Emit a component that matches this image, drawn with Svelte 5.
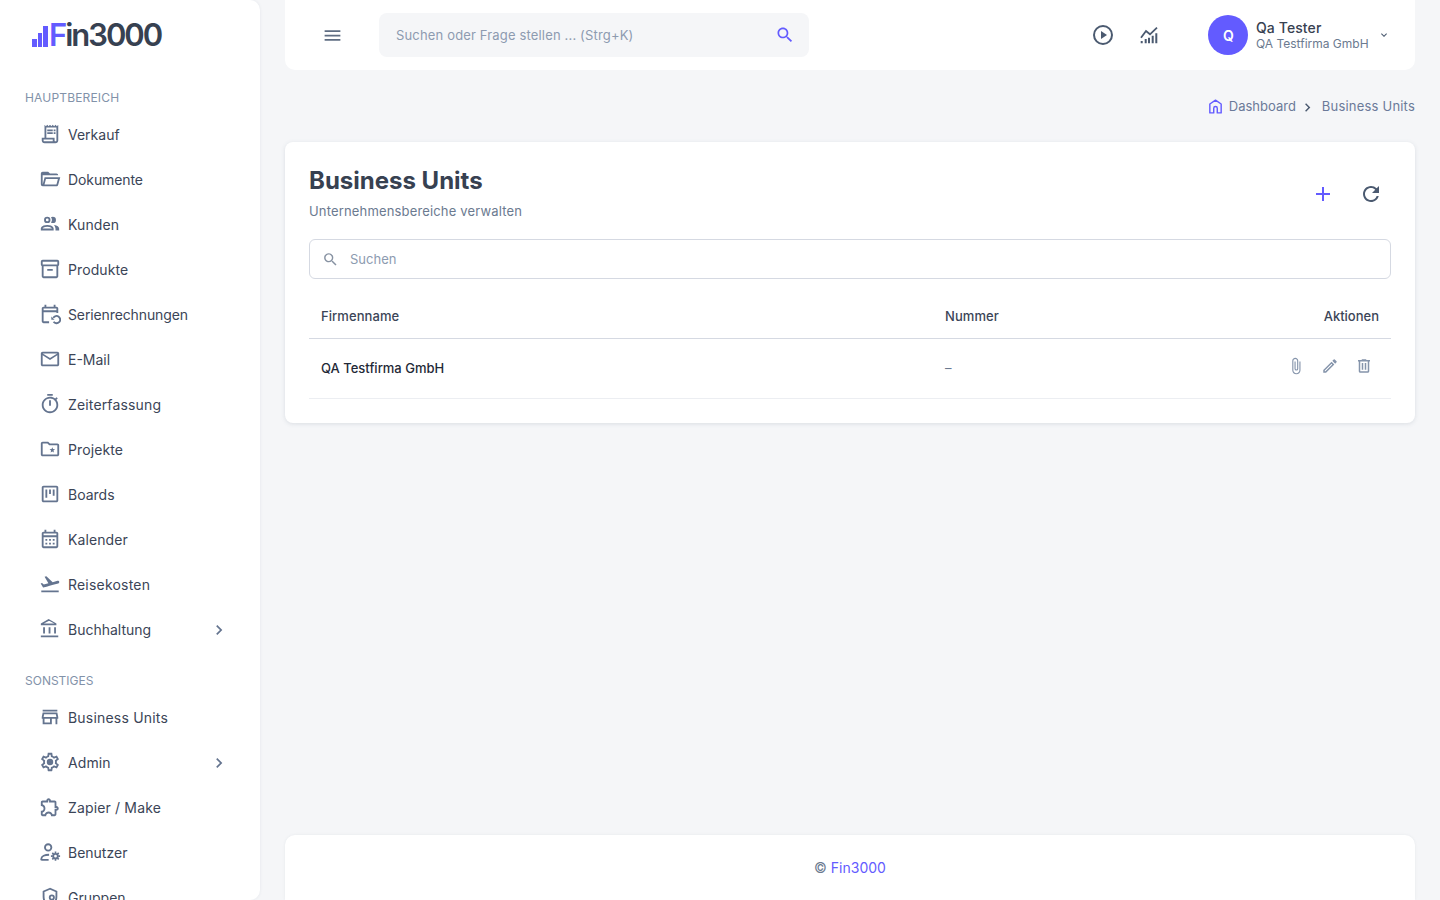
<script>
  const P = {
    receipt: 'M19.5 3.5 18 2l-1.5 1.5L15 2l-1.5 1.5L12 2l-1.5 1.5L9 2 7.5 3.5 6 2v14H3v3c0 1.66 1.34 3 3 3h12c1.66 0 3-1.34 3-3V2l-1.5 1.5zM15 20H6c-.55 0-1-.45-1-1v-1h10v2zm4-1c0 .55-.45 1-1 1s-1-.45-1-1v-3H8V5h11v14zM9 7h6v2H9zM16 7h2v2h-2zM9 10h6v2H9zM16 10h2v2h-2z',
    folder: 'M6.1,10L4,18V8H21A2,2 0 0,0 19,6H12L10,4H4A2,2 0 0,0 2,6V18A2,2 0 0,0 4,20H19C19.9,20 20.7,19.4 20.9,18.5L23.2,10H6.1M19,18H6L7.6,12H20.6L19,18Z',
    people: 'M13.07 10.41A5 5 0 0 0 13.07 4.59A3.39 3.39 0 0 1 15 4A3.5 3.5 0 0 1 15 11A3.39 3.39 0 0 1 13.07 10.41M5.5 7.5A3.5 3.5 0 1 1 9 11A3.5 3.5 0 0 1 5.5 7.5M7.5 7.5A1.5 1.5 0 1 0 9 6A1.5 1.5 0 0 0 7.5 7.5M16 17V19H2V17S2 13 9 13 16 17 16 17M14 17C13.86 16.22 12.67 15 9 15S4.07 16.22 4 17M15.95 13A5.32 5.32 0 0 1 18 17V19H22V17S22 13.37 15.94 13Z',
    archive: 'M20 2H4c-1 0-2 .9-2 2v3.01c0 .72.43 1.34 1 1.69V20c0 1.1 1.1 2 2 2h14c.9 0 2-.9 2-2V8.7c.57-.35 1-.97 1-1.69V4c0-1.1-1-2-2-2zm-1 18H5V9h14v11zm1-13H4V4h16v3zM9 12h6v2H9z',
    mail: 'M22 6c0-1.1-.9-2-2-2H4c-1.1 0-2 .9-2 2v12c0 1.1.9 2 2 2h16c1.1 0 2-.9 2-2V6zm-2 0-8 5-8-5h16zm0 12H4V8l8 5 8-5v10z',
    timer: 'M15 1H9v2h6V1zm-4 13h2V8h-2v6zm8.03-6.61 1.42-1.42c-.43-.51-.9-.99-1.41-1.41l-1.42 1.42C16.07 4.74 14.12 4 12 4c-4.97 0-9 4.03-9 9s4.02 9 9 9 9-4.03 9-9c0-2.12-.74-4.07-1.97-5.61zM12 20c-3.87 0-7-3.13-7-7s3.13-7 7-7 7 3.13 7 7-3.13 7-7 7z',
    star: 'M20 6h-8l-2-2H4c-1.1 0-2 .9-2 2v12c0 1.1.9 2 2 2h16c1.1 0 2-.9 2-2V8c0-1.1-.9-2-2-2zm0 12H4V6h5.17l2 2H20v10zM14.5 10l.8 2 2.2.2-1.7 1.4.5 2.1-1.8-1.1-1.8 1.1.5-2.1-1.7-1.4 2.2-.2z',
    board: 'M19 3H5c-1.1 0-2 .9-2 2v14c0 1.1.9 2 2 2h14c1.1 0 2-.9 2-2V5c0-1.1-.9-2-2-2zm0 16H5V5h14v14zM7 7h2v9H7zM11 7h2v5h-2zM15 7h2v7h-2z',
    cal: 'M19 4h-1V2h-2v2H8V2H6v2H5c-1.11 0-2 .9-2 2v14c0 1.1.89 2 2 2h14c1.1 0 2-.9 2-2V6c0-1.1-.9-2-2-2zm0 16H5V10h14v10zm0-12H5V6h14v2zM9 14H7v-2h2v2zm4 0h-2v-2h2v2zm4 0h-2v-2h2v2zm-8 4H7v-2h2v2zm4 0h-2v-2h2v2zm4 0h-2v-2h2v2z',
    plane: 'M2.5 19h19v2h-19v-2zm19.57-9.36c-.21-.8-1.04-1.28-1.84-1.06L14.92 10l-6.9-6.43-1.93.51 4.14 7.17-4.97 1.33-1.97-1.54-1.45.39 2.59 4.49s7.12-1.9 16.57-4.43c.81-.23 1.28-1.05 1.07-1.85z',
    bank: 'M6.5 10h-2v7h2v-7zm6 0h-2v7h2v-7zm8.5 9H2v2h19v-2zm-2.5-9h-2v7h2v-7zm-7-6.74L16.71 6H5.29l5.21-2.74m0-2.26L2 6v2h17V6l-8.5-5z',
    store: 'M18.36 9l.6 3H5.04l.6-3h12.72M20 4H4v2h16V4zm0 3H4l-1 5v2h1v6h10v-6h4v6h2v-6h1v-2l-1-5zM6 18v-4h6v4H6z',
    gear: 'M19.43 12.98c.04-.32.07-.64.07-.98 0-.34-.03-.66-.07-.98l2.11-1.65c.19-.15.24-.42.12-.64l-2-3.46c-.09-.16-.26-.25-.44-.25-.06 0-.12.01-.17.03l-2.49 1c-.52-.4-1.08-.73-1.69-.98l-.38-2.65C14.46 2.18 14.25 2 14 2h-4c-.25 0-.46.18-.49.42l-.38 2.65c-.61.25-1.17.59-1.69.98l-2.49-1c-.06-.02-.12-.03-.18-.03-.17 0-.34.09-.43.25l-2 3.46c-.13.22-.07.49.12.64l2.11 1.65c-.04.32-.07.65-.07.98 0 .33.03.66.07.98l-2.11 1.65c-.19.15-.24.42-.12.64l2 3.46c.09.16.26.25.44.25.06 0 .12-.01.17-.03l2.49-1c.52.4 1.08.73 1.69.98l.38 2.65c.03.24.24.42.49.42h4c.25 0 .46-.18.49-.42l.38-2.65c.61-.25 1.17-.59 1.69-.98l2.49 1c.06.02.12.03.18.03.17 0 .34-.09.43-.25l2-3.46c.12-.22.07-.49-.12-.64l-2.11-1.65zm-1.98-1.71c.04.31.05.52.05.73 0 .21-.02.43-.05.73l-.14 1.13.89.7 1.08.84-.7 1.21-1.27-.51-1.04-.42-.9.68c-.43.32-.84.56-1.25.73l-1.06.43-.16 1.13-.2 1.35h-1.4l-.19-1.35-.16-1.13-1.06-.43c-.43-.18-.83-.41-1.23-.71l-.91-.7-1.06.43-1.27.51-.7-1.21 1.08-.84.89-.7-.14-1.13c-.03-.31-.05-.54-.05-.74s.02-.43.05-.73l.14-1.13-.89-.7-1.08-.84.7-1.21 1.27.51 1.04.42.9-.68c.43-.32.84-.56 1.25-.73l1.06-.43.16-1.13.2-1.35h1.39l.19 1.35.16 1.13 1.06.43c.43.18.83.41 1.23.71l.91.7 1.06-.43 1.27-.51.7 1.21-1.07.85-.89.7.14 1.13zM12 8.5a3.5 3.5 0 1 0 0 7 3.5 3.5 0 0 0 0-7z',
    puzzle: 'M10.5 4.5c.28 0 .5.22.5.5v2h6v6h2c.28 0 .5.22.5.5s-.22.5-.5.5h-2v6h-2.12c-.68-1.75-2.39-3-4.38-3s-3.7 1.25-4.38 3H4v-2.12c1.75-.68 3-2.39 3-4.38 0-1.99-1.24-3.7-2.99-4.38L4 7h6V5c0-.28.22-.5.5-.5m0-2C9.12 2.5 8 3.62 8 5H4c-1.1 0-1.99.9-1.99 2v3.8h.29c1.49 0 2.7 1.21 2.7 2.7s-1.21 2.7-2.7 2.7H2V20c0 1.1.9 2 2 2h3.8v-.3c0-1.49 1.21-2.7 2.7-2.7s2.7 1.21 2.7 2.7v.3H17c1.1 0 2-.9 2-2v-4c1.38 0 2.5-1.12 2.5-2.5S20.38 11 19 11V7c0-1.1-.9-2-2-2h-4c0-1.38-1.12-2.5-2.5-2.5z',
    recur: 'M19 4h-1V2h-2v2H8V2H6v2H5c-1.1 0-2 .9-2 2v14c0 1.1.9 2 2 2h6v-2H5V10h14v1h2V6c0-1.1-.9-2-2-2zm0 4H5V6h14v2z',
    search: 'M15.5 14h-.79l-.28-.27C15.41 12.59 16 11.11 16 9.5 16 5.91 13.09 3 9.5 3S3 5.91 3 9.5 5.91 16 9.5 16c1.61 0 3.09-.59 4.23-1.57l.27.28v.79l5 4.99L20.49 19l-4.99-5zm-6 0C7.01 14 5 11.99 5 9.5S7.01 5 9.5 5 14 7.01 14 9.5 11.99 14 9.5 14z'
  };
  const main = [
    ['Verkauf', 'receipt'], ['Dokumente', 'folder'], ['Kunden', 'people'], ['Produkte', 'archive'],
    ['Serienrechnungen', 'recur', 'recur'], ['E-Mail', 'mail'], ['Zeiterfassung', 'timer'], ['Projekte', 'star'],
    ['Boards', 'board'], ['Kalender', 'cal'], ['Reisekosten', 'plane'], ['Buchhaltung', 'bank', null, true]
  ];
  const other = [
    ['Business Units', 'store'], ['Admin', 'gear', null, true], ['Zapier / Make', 'puzzle'],
    ['Benutzer', null, 'user'], ['Gruppen', null, 'shield']
  ];
  const tracking = {
    'Business Units': 0.2, 'Zeiterfassung': 0.15, 'Zapier / Make': 0.15, 'Reisekosten': 0.2,
    'Serienrechnungen': -0.12, 'Kalender': 0.1, 'Produkte': 0.1, 'Admin': 0.1, 'Kunden': 0.1,
    'Dokumente': -0.1, 'Projekte': 0.1
  };
</script>

{#snippet item(row)}
  <a class="nav-item" href="#top">
    <svg class="nav-icon" viewBox="0 0 24 24" aria-hidden="true">
      {#if row[1]}<path d={P[row[1]]} />{/if}
      {#if row[2] === 'recur'}
        <path class="line" d="M15.6 16.2a4 4 0 1 1 .3 4.3" /><path d="M13.4 14.6v3.6h3.6z" />
      {:else if row[2] === 'user'}
        <circle class="line" cx="10" cy="7" r="3.5" />
        <path class="line" d="M2.500 21v-1.500c0-2.800 4-4.500 8.500-4.500M2.500 20.500h8" />
        <circle class="line" cx="18" cy="16.500" r="2.500" />
        <path class="line dash" d="M18 11.500v2M18 19.500v2M13 16.500h2M21 16.500h2M14.500 13l1.400 1.400M20.100 18.600l1.400 1.400M14.500 20l1.400-1.400M20.100 14.400l1.400-1.400" />
      {:else if row[2] === 'shield'}
        <path class="line" d="M12 3 5 6v5.500c0 5 3 8.800 7 10.200 4-1.400 7-5.200 7-10.200V6z" />
        <circle class="line" cx="14" cy="12.500" r="2.300" />
      {/if}
    </svg>
    <span class="nav-label" style:letter-spacing={tracking[row[0]] ? tracking[row[0]] + 'px' : null}>{row[0]}</span>
    {#if row[3]}
      <svg class="nav-chevron" viewBox="0 0 24 24" aria-hidden="true"><path d="M10 6 8.59 7.41 13.17 12l-4.58 4.59L10 18l6-6z" /></svg>
    {/if}
  </a>
{/snippet}

<div class="app" id="top">
  <aside class="sidebar">
    <div class="logo">
      <span class="bars"><i class="b1"></i><i class="b2"></i><i class="b3"></i></span>
      <span class="logo-text"><span class="logo-f">F</span>in3000</span>
    </div>
    <div class="section first">HAUPTBEREICH</div>
    {#each main as row}{@render item(row)}{/each}
    <div class="section second">SONSTIGES</div>
    {#each other as row}{@render item(row)}{/each}
  </aside>

  <main class="main">
    <header class="topbar">
      <svg class="menu" viewBox="0 0 24 24" aria-hidden="true"><path d="M3 18h18v-2H3v2zm0-5h18v-2H3v2zm0-7v2h18V6H3z" /></svg>
      <div class="global-search">
        <span>Suchen oder Frage stellen ... (Strg+K)</span>
        <svg viewBox="0 0 24 24" aria-hidden="true"><path d={P.search} /></svg>
      </div>
      <svg class="top-icon first-top" viewBox="0 0 24 24" aria-hidden="true">
        <path d="M12 2a10 10 0 1 0 0 20 10 10 0 0 0 0-20zm0 18a8 8 0 1 1 0-16 8 8 0 0 1 0 16z" /><path d="M10 8v8l6-4z" />
      </svg>
      <svg class="chart" viewBox="0 0 18 18" aria-hidden="true">
        <path d="M.7 15h2v2.300h-2zM4.700 13h2v4.300h-2zM8 11.700h2v5.600H8zM11.700 9.700h2v7.600h-2zM15.300 7.300h2v10h-2z" />
        <path class="chart-line" d="M1 11.700 6 5l4 3.300 7-6.600" />
      </svg>
      <div class="avatar">Q</div>
      <div class="user">
        <div class="user-name">Qa Tester</div>
        <div class="user-company">QA Testfirma GmbH</div>
      </div>
      <svg class="user-chevron" viewBox="0 0 24 24" aria-hidden="true"><path d="M16.59 8.59 12 13.17 7.41 8.59 6 10l6 6 6-6z" /></svg>
    </header>

    <nav class="crumbs">
      <svg class="home" viewBox="0 0 24 24" aria-hidden="true"><path d="M12 3 4 8.500V21h5.500v-6.500a2.500 2.500 0 0 1 5 0V21H20V8.500z" /></svg>
      <span>Dashboard</span>
      <svg class="crumb-sep" viewBox="0 0 24 24" aria-hidden="true"><path d="M10 6 8.590 7.410 13.170 12l-4.580 4.590L10 18l6-6z" /></svg>
      <span class="crumb-current">Business Units</span>
    </nav>

    <section class="card">
      <div class="card-head">
        <div class="titles">
          <h1>Business Units</h1>
          <p>Unternehmensbereiche verwalten</p>
        </div>
        <div class="card-actions">
          <svg class="plus" viewBox="0 0 24 24" aria-hidden="true"><path d="M19 13h-6v6h-2v-6H5v-2h6V5h2v6h6v2z" /></svg>
          <svg class="refresh" viewBox="0 0 24 24" aria-hidden="true"><path d="M17.650 6.350A7.958 7.958 0 0 0 12 4c-4.420 0-7.990 3.580-7.990 8s3.570 8 7.990 8c3.730 0 6.840-2.550 7.730-6h-2.080A5.990 5.990 0 0 1 12 18c-3.310 0-6-2.690-6-6s2.690-6 6-6c1.660 0 3.140.690 4.220 1.780L13 11h7V4l-2.350 2.350z" /></svg>
        </div>
      </div>
      <div class="filter">
        <svg viewBox="0 0 24 24" aria-hidden="true"><path d={P.search} /></svg>
        <span>Suchen</span>
      </div>
      <div class="row head">
        <div class="tracked">Firmenname</div><div class="tracked">Nummer</div><div class="right">Aktionen</div>
      </div>
      <div class="row body">
        <div class="company">QA Testfirma GmbH</div>
        <div class="number">–</div>
        <div class="actions">
          <svg viewBox="0 0 24 24" aria-hidden="true"><path d="M16.500 6v11.500c0 2.210-1.790 4-4 4s-4-1.790-4-4V5a2.500 2.500 0 0 1 5 0v10.500c0 .550-.450 1-1 1s-1-.450-1-1V6H10v9.500a2.500 2.500 0 0 0 5 0V5c0-2.210-1.790-4-4-4S7 2.790 7 5v12.500c0 3.040 2.460 5.500 5.500 5.500s5.500-2.460 5.500-5.500V6h-1.500z" /></svg>
          <svg viewBox="0 0 24 24" aria-hidden="true"><path d="M3 17.250V21h3.750L17.810 9.940l-3.750-3.750L3 17.250zM5.920 19H5v-.920l9.060-9.060.920.920L5.920 19zM20.710 7.040a1 1 0 0 0 0-1.410l-2.340-2.340a1 1 0 0 0-1.410 0l-1.830 1.830 3.750 3.750 1.830-1.830z" /></svg>
          <svg viewBox="0 0 24 24" aria-hidden="true"><path d="M15 4V3H9v1H4v2h1v13c0 1.100.9 2 2 2h10c1.100 0 2-.9 2-2V6h1V4h-5zm2 15H7V6h10v13zM9 8h2v9H9zM13 8h2v9h-2z" /></svg>
        </div>
      </div>
    </section>

    <footer class="footer">© <span class="brand">Fin3000</span></footer>
  </main>
</div>

<style>
  :global(body) {
    margin: 0;
    background: #f5f6f8;
    font-family: Inter, "Liberation Sans", sans-serif;
  }
  .app {
    display: flex;
    height: 100vh;
    overflow: hidden;
    background: #f5f6f8;
    color: #3b4557;
  }
  .sidebar {
    flex: 0 0 260px;
    width: 260px;
    height: 100vh;
    overflow: hidden;
    box-sizing: border-box;
    background: #fff;
    border-radius: 0 10px 10px 0;
    box-shadow: 0 0 3px rgba(100, 116, 139, 0.12);
  }
  .logo {
    display: flex;
    align-items: flex-end;
    height: 47px;
    padding-left: 32px;
  }
  .bars {
    display: flex;
    align-items: flex-end;
    gap: 1px;
    height: 21px;
  }
  .bars i {
    display: block;
    width: 4.700px;
    background: #635bff;
  }
  .b1 { height: 8px; }
  .b2 { height: 14px; }
  .b3 { height: 21px; }
  .logo-text {
    margin-left: 1px;
    font-size: 31px;
    font-weight: 600;
    line-height: 24px;
    height: 24px;
    letter-spacing: -2.050px;
    color: #374151;
  }
  .logo-f { color: #635bff; }
  .section {
    padding-left: 25px;
    font-size: 12px;
    line-height: 16px;
    color: #8292a9;
  }
  .section.first { margin-top: 43px; margin-bottom: 6px; letter-spacing: 0.17px; }
  .section.second { margin-top: 21px; margin-bottom: 6px; }
  .nav-item {
    display: flex;
    align-items: center;
    height: 45px;
    padding-left: 39px;
    padding-right: 31px;
    text-decoration: none;
    color: #3b4557;
    font-size: 14px;
  }
  .nav-icon {
    width: 22px;
    height: 22px;
    flex: none;
    margin: -1px 7px 0 0;
    fill: #64748f;
  }
  .nav-icon .line {
    fill: none;
    stroke: #64748f;
    stroke-width: 2;
  }
  .nav-icon .dash { stroke-width: 1.800; }
  .nav-label { flex: 1; }
  .nav-chevron {
    width: 20px;
    height: 20px;
    fill: #64748f;
  }
  .main {
    flex: 1;
    min-width: 0;
    height: 100vh;
    box-sizing: border-box;
    padding: 0 25px;
    display: flex;
    flex-direction: column;
  }
  .topbar {
    flex: none;
    display: flex;
    align-items: center;
    height: 70px;
    box-sizing: border-box;
    background: #fff;
    border-radius: 0 0 10px 10px;
    padding: 0 24px 0 37px;
  }
  .menu {
    width: 21px;
    height: 21px;
    fill: #5f6d82;
    margin-right: 36px;
  }
  .global-search {
    display: flex;
    align-items: center;
    justify-content: space-between;
    box-sizing: border-box;
    width: 430px;
    height: 44px;
    padding: 0 14px 0 17px;
    background: #f5f6f8;
    border-radius: 8px;
    font-size: 13px;
    letter-spacing: 0.16px;
    color: #8d9bb0;
  }
  .global-search svg {
    width: 20px;
    height: 20px;
    fill: #635bff;
  }
  .top-icon {
    width: 24px;
    height: 24px;
    fill: #4b5a70;
  }
  .first-top { margin-left: 282px; }
  .chart {
    width: 18px;
    height: 18px;
    margin-left: 25px;
    fill: #4b5a70;
  }
  .chart-line {
    fill: none;
    stroke: #4b5a70;
    stroke-width: 1.800;
  }
  .avatar {
    display: flex;
    align-items: center;
    justify-content: center;
    box-sizing: border-box;
    width: 40px;
    height: 40px;
    margin-left: 50px;
    padding-left: 1px;
    border-radius: 50%;
    background: #635bff;
    color: #fff;
    font-size: 14px;
    font-weight: 600;
  }
  .user { margin-left: 8px; }
  .user-name {
    font-size: 14px;
    line-height: 17px;
    font-weight: 500;
    letter-spacing: 0.1px;
    color: #374151;
  }
  .user-company {
    font-size: 12px;
    line-height: 15px;
    color: #6b7a90;
  }
  .user-chevron {
    width: 12px;
    height: 12px;
    margin-left: 9px;
    fill: #4b5a70;
  }
  .crumbs {
    flex: none;
    display: flex;
    align-items: center;
    justify-content: flex-end;
    height: 72px;
    font-size: 13px;
    color: #6b7a99;
  }
  .crumb-current { letter-spacing: 0.2px; }
  .home {
    width: 17px;
    height: 17px;
    margin-right: 4.500px;
    fill: none;
    stroke: #635bff;
    stroke-width: 2;
    stroke-linejoin: round;
  }
  .crumb-sep {
    width: 17px;
    height: 17px;
    margin: 2px 6px 0 3px;
    fill: #4b5a70;
  }
  .card {
    flex: none;
    background: #fff;
    border-radius: 8px;
    box-shadow: 0 1px 4px rgba(100, 116, 139, 0.18);
    padding: 24px 24px 24px;
  }
  .card-head {
    display: flex;
    justify-content: space-between;
    align-items: flex-start;
    height: 73px;
    box-sizing: border-box;
  }
  .titles { padding-top: 1px; }
  h1 {
    margin: 0;
    font-size: 24px;
    line-height: 28px;
    font-weight: 700;
    color: #374151;
  }
  .card-head p {
    margin: 8px 0 0;
    font-size: 13px;
    line-height: 16px;
    letter-spacing: 0.16px;
    color: #6b7a90;
  }
  .card-actions {
    display: flex;
    align-items: center;
    gap: 24px;
    padding-right: 8px;
    padding-top: 16px;
  }
  .card-actions svg { width: 24px; height: 24px; }
  .plus { fill: #635bff; }
  .refresh { fill: #4b5a70; }
  .filter {
    display: flex;
    align-items: center;
    height: 40px;
    box-sizing: border-box;
    border: 1px solid #d5d9e2;
    border-radius: 6px;
    padding-left: 12px;
    font-size: 13px;
    color: #8d9bb0;
  }
  .filter svg {
    width: 17px;
    height: 17px;
    margin-right: 11px;
    fill: #8792a2;
  }
  .row {
    display: grid;
    grid-template-columns: 624px 1fr auto;
    align-items: center;
    padding: 0 12px;
  }
  .row.head {
    height: 60px;
    box-sizing: border-box;
    border-bottom: 1px solid #d5d9e2;
    padding-top: 15px;
    font-size: 13px;
    font-weight: 500;
    color: #3b4557;
  }
  .tracked { letter-spacing: 0.08px; }
  .row.body {
    height: 60px;
    box-sizing: border-box;
    border-bottom: 1px solid #eceef2;
    padding-bottom: 2px;
    font-size: 13px;
  }
  .right { text-align: right; }
  .company {
    font-weight: 500;
    color: #1f2937;
  }
  .number { color: #6b7a90; }
  .actions {
    display: flex;
    gap: 16px;
    padding-right: 6px;
    margin-top: -3px;
  }
  .actions svg {
    width: 18px;
    height: 18px;
    fill: #8594ab;
  }
  .footer {
    flex: none;
    height: 65px;
    box-sizing: border-box;
    margin-top: auto;
    padding-top: 24px;
    background: #fff;
    border-radius: 10px 10px 0 0;
    box-shadow: 0 0 3px rgba(100, 116, 139, 0.1);
    text-align: center;
    font-size: 14px;
    line-height: 17px;
    color: #6b7a90;
  }
  .brand { color: #635bff; }
</style>
